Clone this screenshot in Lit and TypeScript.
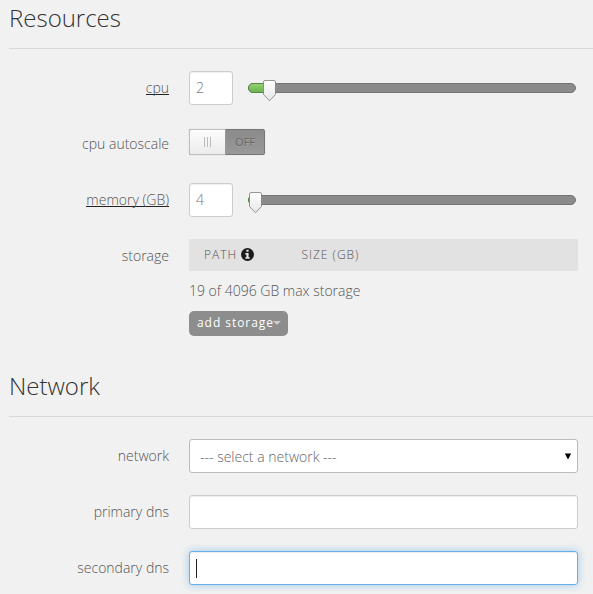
import { LitElement, html, css, svg } from "lit";
import { customElement, property } from "lit/decorators.js";

@customElement("form-row")
class FormRow extends LitElement {
  @property() label = "";
  @property({ type: Boolean }) hint = false;

  static styles = css`
    :host { display: grid; grid-template-columns: 160px 389px; column-gap: 20px; min-height: 34px; margin-bottom: 22px; }
    .label { text-align: right; line-height: 20px; padding-top: 7px; }
    .hint { border-bottom: 1px solid #222; display: inline-block; line-height: 18px; height: 15px; margin-top: 1px; }
  `;

  render() {
    return html`
      <div class="label"><span class=${this.hint ? "hint" : ""}>${this.label}</span></div>
      <div><slot></slot></div>
    `;
  }
}

@customElement("value-slider")
class ValueSlider extends LitElement {
  @property({ type: Number }) value = 0;
  @property({ type: Number }) offset = 0;

  static styles = css`
    :host { display: flex; height: 34px; }
    .box { box-sizing: border-box; width: 44px; height: 34px; border: 1px solid #ccc; border-radius: 3px; background: #fff; padding: 0 6px; line-height: 32px; color: #777; box-shadow: inset 0 1px 1px rgba(0,0,0,.06); }
    .track { box-sizing: border-box; position: relative; width: 328px; height: 10px; margin: 12px 0 0 15px; background: #8b8b8b; border: 1px solid #747474; border-radius: 5px; }
    .fill { box-sizing: border-box; height: 10px; margin: -1px; border: 1px solid #578746; border-radius: 5px 0 0 5px; background: linear-gradient(#93d075, #6bb44e); }
    .thumb { position: absolute; top: -4px; }
  `;

  render() {
    return html`
      <div class="box">${this.value}</div>
      <div class="track">
        <div class="fill" style="width:${this.offset + 6}px"></div>
        <svg class="thumb" style="left:${this.offset - 1}px" width="13" height="22" viewBox="0 0 13 22">
          ${svg`
            <defs><linearGradient id="g" x1="0" y1="0" x2="0" y2="1"><stop offset="0" stop-color="#fff"/><stop offset="1" stop-color="#e6e6e6"/></linearGradient></defs>
            <path d="M2 .5H11Q12.5 .5 12.5 2V14.5L6.5 20.8L.5 14.5V2Q.5 .5 2 .5Z" fill="url(#g)" stroke="#777" stroke-opacity=".75"/>
          `}
        </svg>
      </div>
    `;
  }
}

@customElement("app-root")
class AppRoot extends LitElement {
  static styles = css`
    :host { display: block; box-sizing: border-box; height: 594px; overflow: hidden; padding-left: 9px; background: #f1f1f1; font: 300 14px/20px "Open Sans", sans-serif; color: #555; }
    .section { height: 368px; }
    h2 { box-sizing: border-box; height: 49px; margin: 0 0 22px; padding-top: 3px; font-size: 24px; line-height: 30px; font-weight: 300; color: #333; border-bottom: 1px solid #d8d8d8; }
    .toggle { display: flex; box-sizing: border-box; width: 76px; height: 26px; margin-top: 2px; border: 1px solid #777; border-radius: 2px; background: linear-gradient(#8b8b8b, #999); box-shadow: 0 0 1px #aaa; }
    .grip { box-sizing: border-box; display: flex; gap: 2px; align-items: center; justify-content: center; width: 37px; height: 26px; margin: -1px 0 0 -1px; border: 1px solid #c0c0c0; border-right-color: #999; border-radius: 2px 0 0 2px; background: linear-gradient(#fcfcfc, #ececec); }
    .grip i { width: 1px; height: 10px; background: #bbb; }
    .off { flex: 1; font-size: 11px; line-height: 24px; text-align: center; font-weight: 400; color: #666; text-shadow: 0 1px 0 #a4a4a4; }
    .table-head { display: flex; align-items: center; height: 32px; padding-left: 15px; background: #e2e2e2; font-size: 12px; letter-spacing: 1px; }
    .path { display: flex; align-items: center; width: 97px; gap: 4px; }
    .path svg { margin-top: -2px; }
    .size { padding-left: .4px; }
    .quota { margin: 10px 0; }
    .button { display: inline-flex; box-sizing: border-box; align-items: center; width: 99px; height: 25px; padding: 0 0 2px 8px; border-radius: 5px; background: #8d8d8d; color: #fff; font-size: 12px; font-weight: 400; letter-spacing: .95px; }
    .button, .quota { white-space: nowrap; }
    .caret { flex: none; margin-left: -1px; border: 4px solid transparent; border-top-color: #ccc; border-bottom: 0; }
    .field { display: flex; align-items: center; box-sizing: border-box; width: 389px; height: 34px; border: 1px solid #ccc; border-radius: 3px; background: #fff; box-shadow: inset 0 1px 1px rgba(0,0,0,.075); }
    .select { justify-content: space-between; padding: 2px 5px 0 10px; border-color: #bbb; box-shadow: none; color: #666; }
    .select svg { margin-top: -2px; }
    .focused { border-color: #66afe9; padding-left: 6px; box-shadow: inset 0 1px 1px rgba(0,0,0,.075), 0 0 8px rgba(102,175,233,.6); }
    .cursor { width: 1px; height: 19px; background: #222; }
  `;

  render() {
    return html`
      <div class="section">
        <h2>Resources</h2>
        <form-row label="cpu" hint><value-slider .value=${2} .offset=${15}></value-slider></form-row>
        <form-row label="cpu autoscale">
          <div class="toggle"><div class="grip"><i></i><i></i><i></i></div><div class="off">OFF</div></div>
        </form-row>
        <form-row label="memory (GB)" hint><value-slider .value=${4} .offset=${1}></value-slider></form-row>
        <form-row label="storage">
          <div class="table-head">
            <div class="path">PATH
              <svg width="13" height="13" viewBox="0 0 12 12"><circle cx="6" cy="6" r="6" fill="#1b1b1b"/><path d="M5 1.7H7V3.4H5ZM4 4.5H7V8.5H8V10H4V8.5H5V6H4Z" fill="#e8e8e8"/></svg>
            </div>
            <div class="size">SIZE (GB)</div>
          </div>
          <div class="quota">19 of 4096 GB max storage</div>
          <div class="button">add storage<span class="caret"></span></div>
        </form-row>
      </div>
      <div>
        <h2>Network</h2>
        <form-row label="network">
          <div class="field select"><span>--- select a network ---</span><svg width="8" height="7" viewBox="0 0 8 7"><path d="M.8 .5H7.2L4 6.5Z" fill="#000"/></svg></div>
        </form-row>
        <form-row label="primary dns"><div class="field"></div></form-row>
        <form-row label="secondary dns"><div class="field focused"><span class="cursor"></span></div></form-row>
      </div>
    `;
  }
}
